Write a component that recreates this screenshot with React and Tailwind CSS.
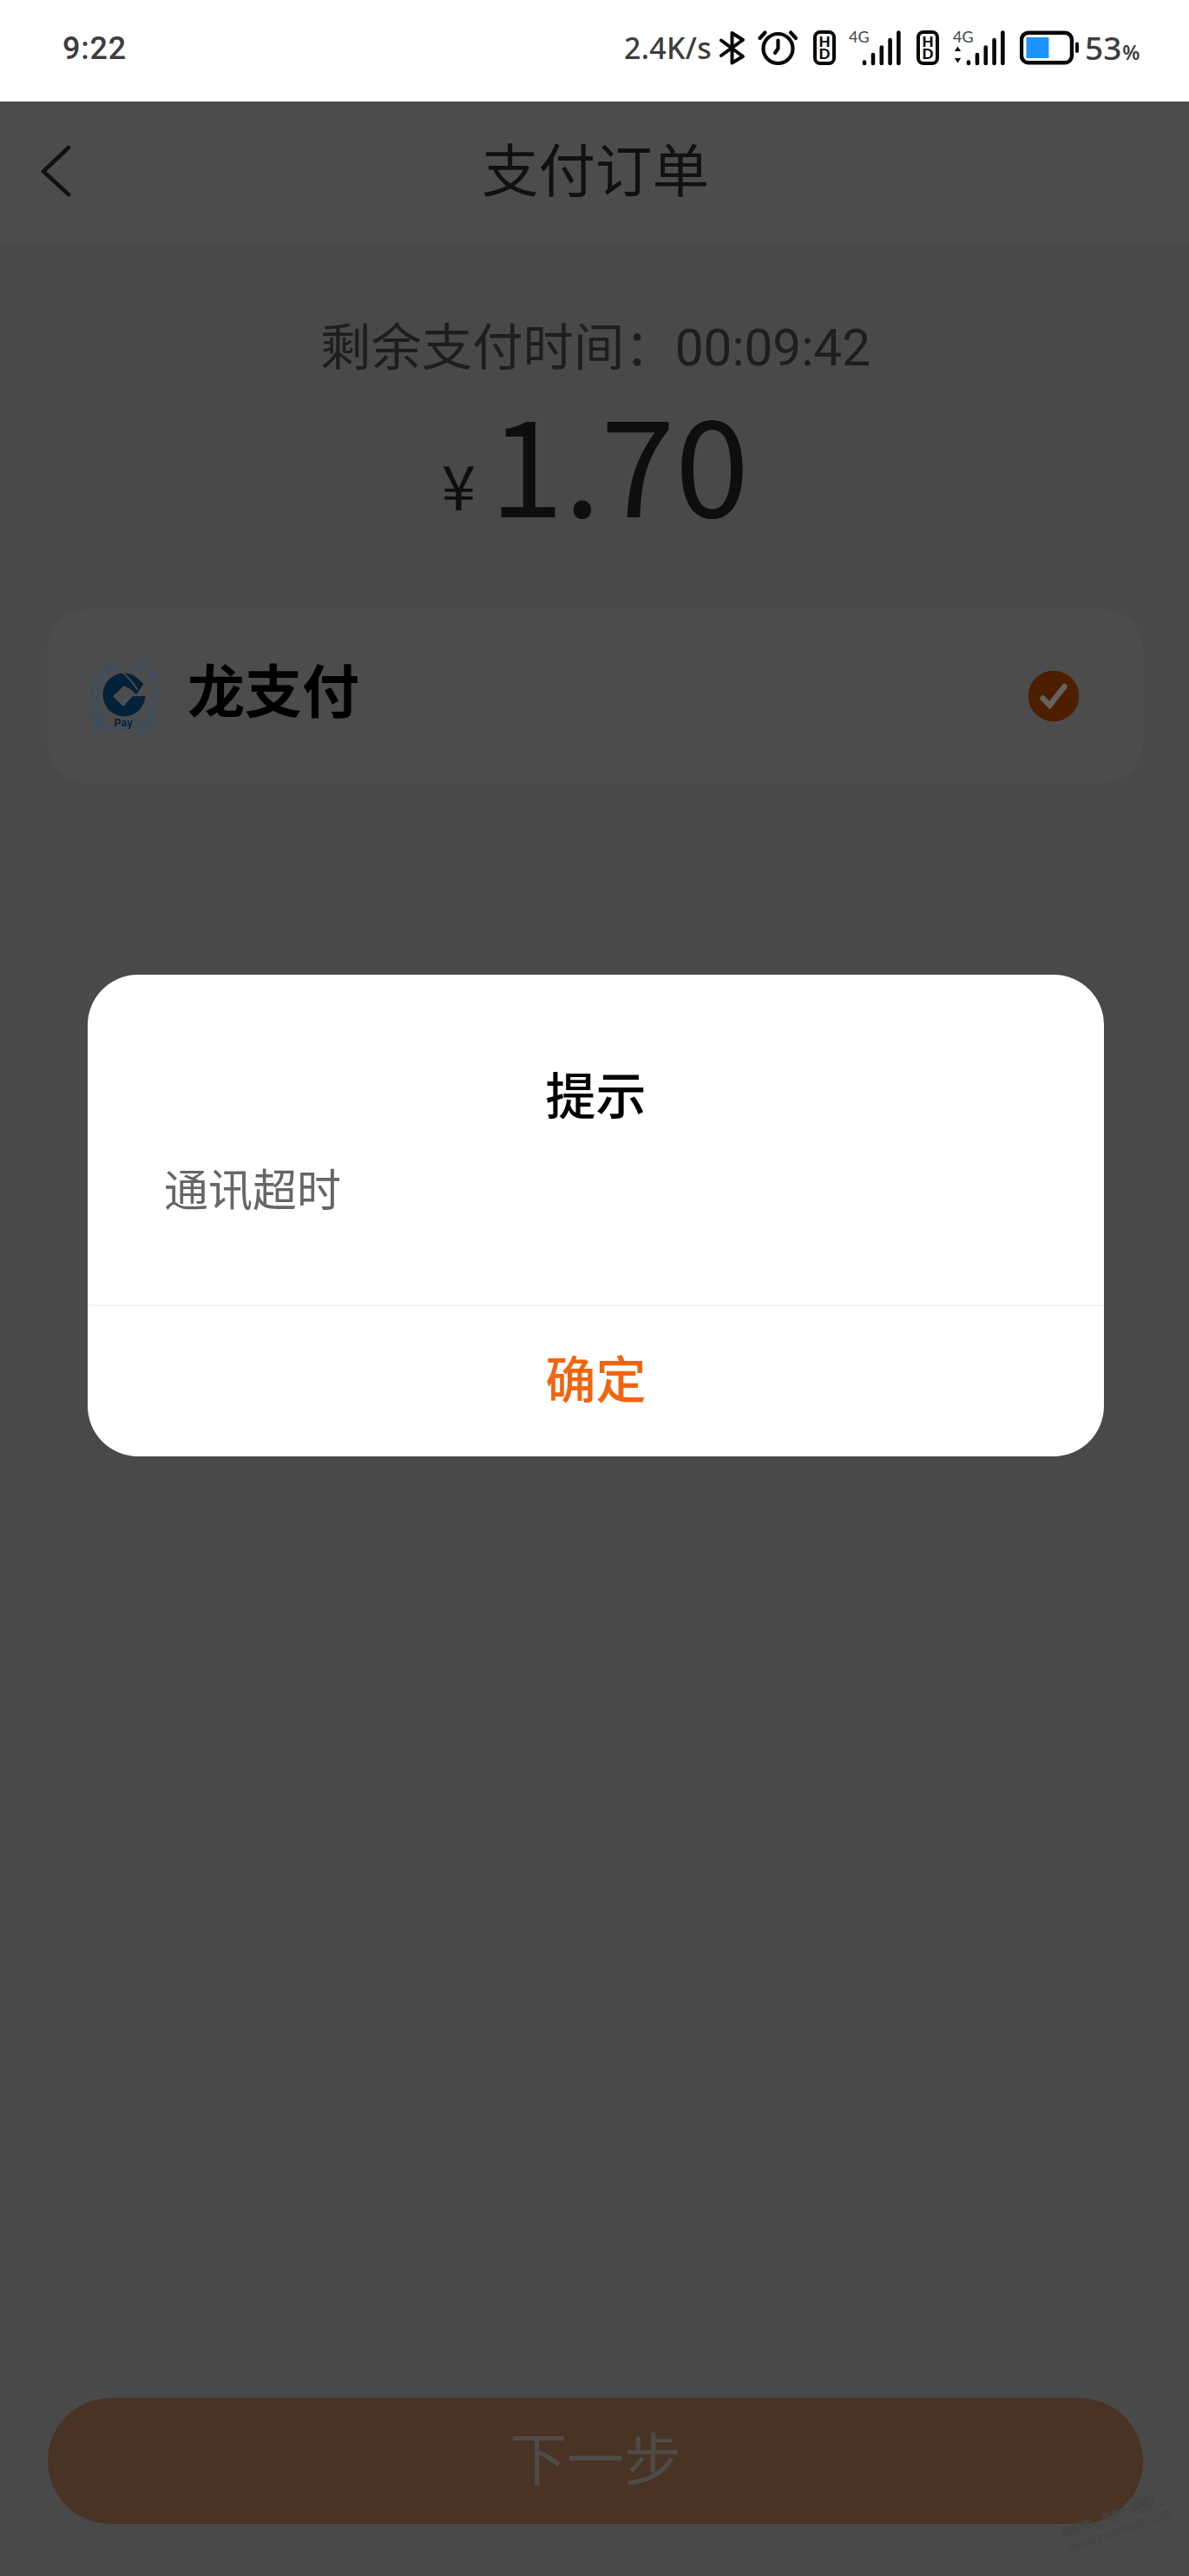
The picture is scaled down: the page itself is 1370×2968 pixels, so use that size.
const CJK = "font-['Noto_Sans_CJK_SC',sans-serif]";

function Signal({ data }) {
  return (
    <div className="relative h-[42px] w-[62px]">
      <span className="absolute left-0 top-0 font-['Lato',sans-serif] text-[18px] leading-[16px] text-[#444]">4G</span>
      <svg viewBox="0 0 62 42" className="h-full w-full" stroke="#080808" strokeWidth="4.6" strokeLinecap="round">
        <path d="M18 37.5v1.4M28 29v10M37.8 20.5v18.5M47.6 12v27M57.4 3.5v35.5" />
        {data && <path d="M5.5 19.5l3.6 5.5h-7.2zM5.5 38.5l3.6-5.5h-7.2z" fill="#080808" stroke="none" />}
      </svg>
    </div>
  );
}

function HdBadge() {
  return (
    <div className="mt-[1px] flex h-[40px] w-[26px] flex-col items-center justify-center rounded-[8px] border-[4px] border-[#080808] font-['Lato',sans-serif] text-[17px] font-black leading-[14.5px] text-[#080808]">
      <span>H</span>
      <span>D</span>
    </div>
  );
}

function StatusBar() {
  return (
    <div className="flex h-[117px] items-start bg-white pl-[72px] pt-[34px] text-[#3d3d3d]">
      <span className="mt-[1px] w-[647px] font-['Roboto',sans-serif] text-[36px] font-medium leading-[42px] tracking-[0.8px]">9:22</span>
      <span className="w-[109px] font-['Noto_Sans',sans-serif] text-[34px] font-medium leading-[43px] tracking-[0.3px]">2.4K/s</span>
      <svg viewBox="0 0 32 42" className="h-[42px] w-[32px]" fill="none" stroke="#080808" strokeWidth="4" strokeLinecap="round" strokeLinejoin="round">
        <path d="M3 12.5L28 31 15.5 38.5V4L28 12 3 30" />
      </svg>
      <svg viewBox="0 0 48 42" className="ml-[12px] h-[42px] w-[48px]" fill="none" stroke="#080808" strokeWidth="4.2" strokeLinecap="round" strokeLinejoin="round">
        <circle cx="24.5" cy="22" r="17" />
        <path d="M24.5 12.5v9.5l-3.5 5M3.5 10l6-6.5M45 10l-6-6.5" />
      </svg>
      <div className="ml-[17px]"><HdBadge /></div>
      <div className="ml-[15px]"><Signal /></div>
      <div className="ml-[16px]"><HdBadge /></div>
      <div className="ml-[16px]"><Signal data /></div>
      <svg viewBox="0 0 70 42" className="ml-[15px] h-[42px] w-[70px]">
        <rect x="2" y="3.8" width="58" height="34.5" rx="8" fill="none" stroke="#080808" strokeWidth="4.4" />
        <rect x="7.5" y="9" width="26" height="24" rx="1" fill="#1a95ff" />
        <rect x="64" y="14.5" width="4" height="12.5" rx="2" fill="#080808" />
      </svg>
      <span className="ml-[5px] flex items-baseline font-['Noto_Sans',sans-serif] text-[37px] font-medium leading-[41px]">
        53<span className="ml-[1px] text-[23px] font-semibold">%</span>
      </span>
    </div>
  );
}

function PayLogo() {
  return (
    <svg viewBox="0 0 84 90" className="h-[90px] w-[84px]" fill="none">
      <g stroke="#3b4e60" strokeWidth="2.400" strokeLinecap="round">
        <path d="M18 20c-8-2-10 6-4 8M16 14c4-8 12-6 12 0s-8 6-8 2M26 8c6 6 12 0 20 4M44 6c6 4 14-2 18 2s-2 8-6 4M62 4c8-2 14 0 14 6M58 12c8 4 14 2 16 10M70 20c8-2 12 4 8 8M10 24c-8 8-2 14-6 20s4 10 8 4M8 30c4 4 6 8 4 14M14 34c-2 8 2 10-4 14" />
        <path d="M12 52c-10 2-10 12-6 18s12 6 16 4M10 58c-2 8 6 10 12 8M4 72c6 8 14 4 20 8s18 4 24 0M6 80c8 6 16 2 24 6M14 60c4 6 2 10-6 8M52 80c8 4 10 2 14-2s10 0 14-6M74 38c8 0 10 6 4 10M72 48c8 4 2 12 6 16s-8 8-14 4M70 58c-2 8 8 8 4 16M56 76c4-4 12-2 14 2M58 84c6 4 10 2 12-1M68 28c4 2 6 4 10 0M32 8c-2 4-6 6-10 6" />
      </g>
      <path d="M66.500 45A24.500 25 0 0 1 42 68.500A24.500 25 0 0 1 17.500 43.500A24.500 25 0 0 1 42 18.500Q52 18.500 59 26L64.500 31 56 43 51 38 42 33 29 45 41 57 52 45z" fill="#04213a" />
      <path d="M40 18Q48 23 57.500 38" stroke="#4c4c4c" strokeWidth="1.800" />
      <text x="30.500" y="79.500" fill="#04213a" fontSize="12" fontWeight="700" fontFamily="Liberation Sans, sans-serif">Pay</text>
    </svg>
  );
}

export default function App() {
  return (
    <div className={`relative flex h-[2968px] w-[1370px] flex-col overflow-hidden bg-[#494949] ${CJK}`}>
      <StatusBar />

      <header className="grid h-[162px] grid-cols-[1fr_auto_1fr] items-center bg-[#4c4c4c]">
        <svg viewBox="0 0 36 62" className="-mt-[2px] ml-[46px] h-[62px] w-[36px]" fill="none" stroke="#111" strokeWidth="4.600" strokeLinecap="round" strokeLinejoin="round">
          <path d="M33 4L4 31.500 33 58" />
        </svg>
        <h1 className="-mt-[11px] pl-[2px] text-[65.500px] leading-[90px] text-[#111]">支付订单</h1>
      </header>

      <section className="flex flex-col items-center pt-[74px]">
        <p className="h-[86px] pl-[2px] text-[58.400px] leading-[86px] text-[#1e1e1e]">
          剩余支付时间：<span className="font-['Roboto',sans-serif]">00:09:42</span>
        </p>
        <p className="-mt-[10px] flex h-[192px] items-baseline text-[#0e0e0e]">
          <span className="relative -top-[8px] ml-[2px] mr-[16px] text-[71px] leading-none">¥</span>
          <span className="text-[154px] leading-[200px]">1.70</span>
        </p>
      </section>

      <section className="ml-[55px] mr-[53px] mt-[81px] flex h-[200px] items-center rounded-[44px] bg-[#4c4c4c] pl-[46px] pr-[73px]">
        <PayLogo />
        <span className="-mt-[21px] ml-[31px] flex-1 text-[66px] font-bold leading-[90px] text-black">龙支付</span>
        <svg viewBox="0 0 60 60" className="h-[60px] w-[60px]" fill="none">
          <circle cx="30" cy="30" r="29.300" fill="#4d1e00" />
          <path d="M17.500 32.500l8 8 17-21.500" stroke="#656260" strokeWidth="6.500" strokeLinecap="round" />
        </svg>
      </section>

      <div className="grow" />
      <button className="mb-[60px] ml-[55px] mr-[53px] h-[145px] rounded-full bg-[#493325] pb-[14px] text-[66px] leading-[90px] text-[#4f4b47]">
        下一步
      </button>

      <div className="absolute left-[101px] top-[1123px] flex h-[555px] w-[1171px] flex-col rounded-[58px] bg-white">
        <h2 className="pt-[91px] text-center text-[58px] font-medium leading-[90px] text-black">提示</h2>
        <p className="pl-[88px] pt-[24px] text-[51px] leading-[80px] text-[#666]">通讯超时</p>
        <button className="mt-auto h-[175px] border-t-2 border-[#f3f3f3] pb-[11px] text-[58px] font-medium leading-[90px] text-[#f26510]">
          确定
        </button>
      </div>

      <div className="absolute left-[1223px] top-[2886px] -rotate-[20deg] text-[12px] leading-[19px] text-[#434343]">
        <p className="whitespace-nowrap border-b border-[#444] font-bold">赚客吧，有我一份哦！</p>
        <p className="font-['Liberation_Sans',sans-serif] text-[15px]">www.zuanke8.com</p>
      </div>
    </div>
  );
}
